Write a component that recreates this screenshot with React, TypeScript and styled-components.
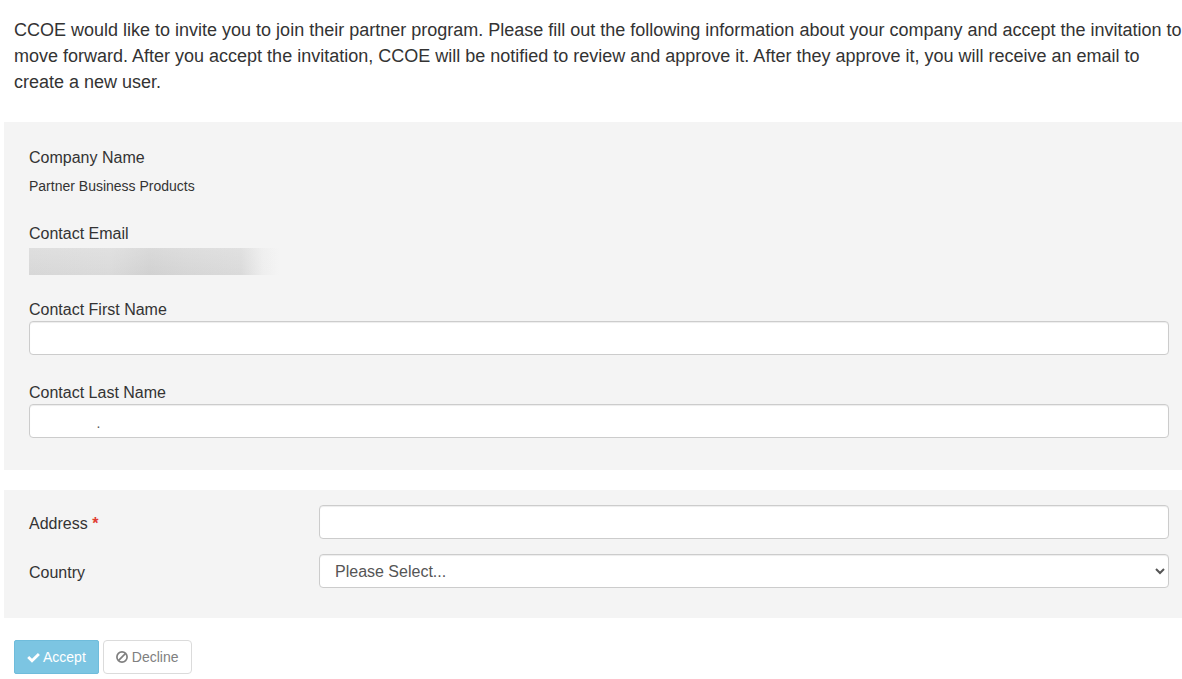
import React from "react";
import styled, { createGlobalStyle } from "styled-components";

const GlobalStyle = createGlobalStyle`
  *, *::before, *::after {
    box-sizing: border-box;
  }
  body {
    margin: 0;
    background: #fff;
    color: #333;
    font-family: "Liberation Sans", Arial, Helvetica, sans-serif;
    font-size: 14px;
    line-height: 20px;
  }
`;

const Page = styled.main`
  padding: 17px 0 0 4px;
`;

const Intro = styled.p`
  margin: 0 0 27px;
  padding-left: 10px;
  font-size: 18px;
  line-height: 26px;
`;

const Panel = styled.section`
  display: flex;
  flex-direction: column;
  margin-bottom: 20px;
  background: #f4f4f4;
`;

const ContactPanel = styled(Panel)`
  gap: 27px;
  padding: 25px 13px 32px 25px;
`;

const AddressPanel = styled(Panel)`
  gap: 15px;
  padding: 15px 13px 30px 25px;
`;

const Field = styled.div`
  display: flex;
  flex-direction: column;
`;

const FieldName = styled.div`
  font-size: 16px;
  line-height: 22px;
`;

const FieldLabel = styled.label`
  font-size: 16px;
  line-height: 22px;
`;

const FieldValue = styled.div`
  height: 27px;
  padding-top: 7px;
`;

const HiddenValue = styled.div`
  width: 250px;
  height: 27px;
  margin: 3px 0 -3px;
  background:
    linear-gradient(to bottom, rgba(244, 244, 244, 0.25), rgba(244, 244, 244, 0)),
    linear-gradient(
      to right,
      #d7d7d7 0,
      #dadada 80px,
      #d1d1d1 120px,
      #d6d6d6 160px,
      #dadada 212px,
      #eeeeee 234px,
      #f4f4f4 250px
    );
`;

const Row = styled.div`
  display: grid;
  grid-template-columns: 290px minmax(0, 1fr);
  align-items: center;
`;

const RowLabel = styled.label`
  padding-top: 4px;
  font-size: 16px;
  line-height: 22px;
`;

const Required = styled.span`
  color: #e03c31;
  font-weight: bold;
`;

const Input = styled.input`
  width: 100%;
  height: 34px;
  padding: 8px 12px 4px;
  border: 1px solid #ccc;
  border-radius: 4px;
  background: #fff;
  box-shadow: inset 0 1px 1px rgba(0, 0, 0, 0.075);
  color: #555;
  font-family: inherit;
  font-size: 14px;
`;

const Select = styled.select`
  width: 100%;
  height: 34px;
  padding: 6px 11px;
  border: 1px solid #ccc;
  border-radius: 4px;
  background: #fff;
  box-shadow: inset 0 1px 1px rgba(0, 0, 0, 0.075);
  color: #555;
  font-family: inherit;
  font-size: 16px;
`;

const Actions = styled.div`
  display: flex;
  gap: 4px;
  padding: 2px 0 5px 10px;
`;

const Button = styled.button<{ $primary?: boolean }>`
  display: flex;
  align-items: center;
  gap: 3px;
  height: 34px;
  padding: 0 12px;
  border: 1px solid ${(p) => (p.$primary ? "#6fbcdb" : "#dbdbdb")};
  border-radius: ${(p) => (p.$primary ? "2px" : "4px")};
  background: ${(p) => (p.$primary ? "#7cc5e2" : "#fff")};
  color: ${(p) => (p.$primary ? "#fff" : "#808080")};
  font: inherit;
  cursor: pointer;
`;

const CheckIcon = () => (
  <svg width="13" height="14" viewBox="0 0 13 14" aria-hidden="true">
    <path d="M1.2 7 5 10.8 11.9 3.9" fill="none" stroke="currentColor" strokeWidth="2.8" />
  </svg>
);

const BanIcon = () => (
  <svg width="13" height="14" viewBox="0 0 13 14" aria-hidden="true">
    <circle cx="6" cy="7" r="5.1" fill="none" stroke="currentColor" strokeWidth="1.7" />
    <path d="M2.4 10.6 9.6 3.4" fill="none" stroke="currentColor" strokeWidth="1.7" />
  </svg>
);

export default function App() {
  return (
    <>
      <GlobalStyle />
      <Page>
        <Intro>
          CCOE would like to invite you to join their partner program. Please fill out the following
          information about your company and accept the invitation to move forward. After you accept
          the invitation, CCOE will be notified to review and approve it. After they approve it, you
          will receive an email to create a new user.
        </Intro>
        <ContactPanel>
          <Field>
            <FieldName>Company Name</FieldName>
            <FieldValue>Partner Business Products</FieldValue>
          </Field>
          <Field>
            <FieldName>Contact Email</FieldName>
            <HiddenValue />
          </Field>
          <Field>
            <FieldLabel htmlFor="first-name">Contact First Name</FieldLabel>
            <Input id="first-name" type="text" />
          </Field>
          <Field>
            <FieldLabel htmlFor="last-name">Contact Last Name</FieldLabel>
            <Input id="last-name" type="text" defaultValue={" ".repeat(14) + "."} />
          </Field>
        </ContactPanel>
        <AddressPanel>
          <Row>
            <RowLabel htmlFor="address">
              Address <Required>*</Required>
            </RowLabel>
            <Input id="address" type="text" required />
          </Row>
          <Row>
            <RowLabel htmlFor="country">Country</RowLabel>
            <Select id="country">
              <option>Please Select...</option>
            </Select>
          </Row>
        </AddressPanel>
        <Actions>
          <Button type="button" $primary>
            <CheckIcon />
            Accept
          </Button>
          <Button type="button">
            <BanIcon />
            Decline
          </Button>
        </Actions>
      </Page>
    </>
  );
}
